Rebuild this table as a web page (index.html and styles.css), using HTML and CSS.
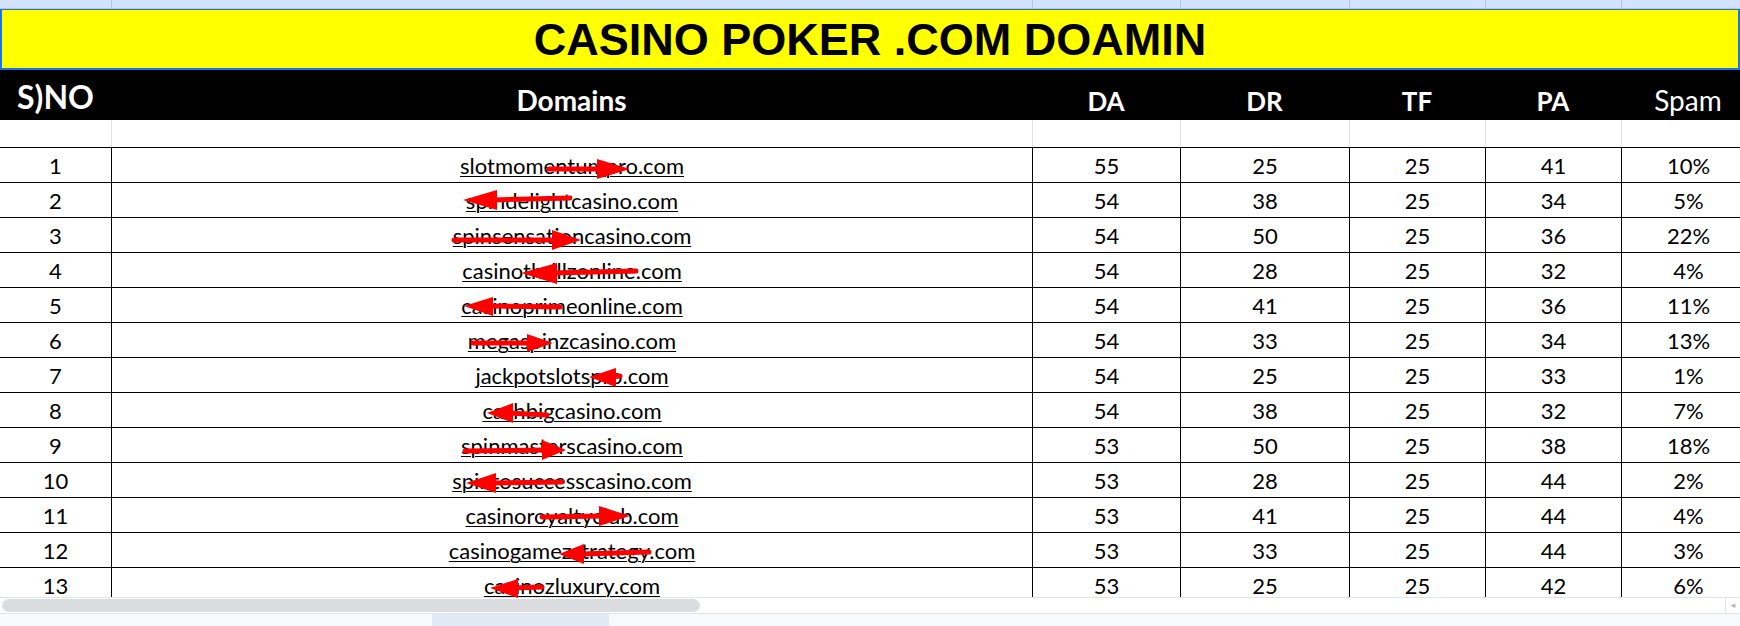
FILE: index.html
```html
<!DOCTYPE html>
<html>
<head>
<meta charset="utf-8">
<title>CASINO POKER .COM DOAMIN</title>
<link rel="stylesheet" href="styles.css">
</head>
<body>
<div class="sheet">
  <div class="row colhead">
    <div class="c"></div><div class="c"></div><div class="c"></div><div class="c"></div><div class="c"></div><div class="c"></div><div class="c"></div>
  </div>
  <div class="title">CASINO POKER .COM DOAMIN</div>
  <div class="row head">
    <div class="c sno">S)NO</div>
    <div class="c dom">Domains</div>
    <div class="c">DA</div>
    <div class="c">DR</div>
    <div class="c">TF</div>
    <div class="c">PA</div>
    <div class="c spam">Spam</div>
  </div>
  <div class="row blank">
    <div class="c"></div><div class="c"></div><div class="c"></div><div class="c"></div><div class="c"></div><div class="c"></div><div class="c"></div>
  </div>
  <div class="data">
    <div class="row d"><div class="c">1</div><div class="c"><span class="link">slotmomentumpro.com</span></div><div class="c">55</div><div class="c">25</div><div class="c">25</div><div class="c">41</div><div class="c">10%</div></div>
    <div class="row d"><div class="c">2</div><div class="c"><span class="link">spindelightcasino.com</span></div><div class="c">54</div><div class="c">38</div><div class="c">25</div><div class="c">34</div><div class="c">5%</div></div>
    <div class="row d"><div class="c">3</div><div class="c"><span class="link">spinsensationcasino.com</span></div><div class="c">54</div><div class="c">50</div><div class="c">25</div><div class="c">36</div><div class="c">22%</div></div>
    <div class="row d"><div class="c">4</div><div class="c"><span class="link">casinothrillzonline.com</span></div><div class="c">54</div><div class="c">28</div><div class="c">25</div><div class="c">32</div><div class="c">4%</div></div>
    <div class="row d"><div class="c">5</div><div class="c"><span class="link">casinoprimeonline.com</span></div><div class="c">54</div><div class="c">41</div><div class="c">25</div><div class="c">36</div><div class="c">11%</div></div>
    <div class="row d"><div class="c">6</div><div class="c"><span class="link">megaspinzcasino.com</span></div><div class="c">54</div><div class="c">33</div><div class="c">25</div><div class="c">34</div><div class="c">13%</div></div>
    <div class="row d"><div class="c">7</div><div class="c"><span class="link">jackpotslotspro.com</span></div><div class="c">54</div><div class="c">25</div><div class="c">25</div><div class="c">33</div><div class="c">1%</div></div>
    <div class="row d"><div class="c">8</div><div class="c"><span class="link">cashbigcasino.com</span></div><div class="c">54</div><div class="c">38</div><div class="c">25</div><div class="c">32</div><div class="c">7%</div></div>
    <div class="row d"><div class="c">9</div><div class="c"><span class="link">spinmasterscasino.com</span></div><div class="c">53</div><div class="c">50</div><div class="c">25</div><div class="c">38</div><div class="c">18%</div></div>
    <div class="row d"><div class="c">10</div><div class="c"><span class="link">spintosuccesscasino.com</span></div><div class="c">53</div><div class="c">28</div><div class="c">25</div><div class="c">44</div><div class="c">2%</div></div>
    <div class="row d"><div class="c">11</div><div class="c"><span class="link">casinoroyaltyclub.com</span></div><div class="c">53</div><div class="c">41</div><div class="c">25</div><div class="c">44</div><div class="c">4%</div></div>
    <div class="row d"><div class="c">12</div><div class="c"><span class="link">casinogamezstrategy.com</span></div><div class="c">53</div><div class="c">33</div><div class="c">25</div><div class="c">44</div><div class="c">3%</div></div>
    <div class="row d"><div class="c">13</div><div class="c"><span class="link">casinozluxury.com</span></div><div class="c">53</div><div class="c">25</div><div class="c">25</div><div class="c">42</div><div class="c">6%</div></div>
  </div>
  <div class="hscroll">
    <div class="thumb"></div>
    <div class="hs-end"><span class="hs-arrow">&#9666;</span></div>
  </div>
  <div class="tabs"><div class="tab-gap"></div><div class="tab-active"></div></div>

  <svg class="arrows" width="1740" height="626" viewBox="0 0 1740 626">
    <g stroke="#ff0000" stroke-width="5" stroke-linecap="round" fill="#ff0000">
      <line x1="549" y1="169" x2="602" y2="169"/><polygon points="630,169 597,159 597,179" stroke="none"/>
      <line x1="570" y1="198" x2="492" y2="200"/><polygon points="463,200 497,190 497,210" stroke="none"/>
      <line x1="454" y1="240" x2="556" y2="240"/><polygon points="581,240 552,230 552,250" stroke="none"/>
      <line x1="636" y1="271" x2="552" y2="273"/><polygon points="521,273 557,263 557,284" stroke="none"/>
      <line x1="560" y1="307" x2="488" y2="306"/><polygon points="464,306 493,297 493,316" stroke="none"/>
      <line x1="473" y1="343" x2="530" y2="343"/><polygon points="553,343 527,334 527,352" stroke="none"/>
      <line x1="620" y1="376" x2="610" y2="377"/><polygon points="589,377 616,368 616,387" stroke="none"/>
      <line x1="547" y1="415" x2="508" y2="413"/><polygon points="487,413 513,403 513,423" stroke="none"/>
      <line x1="465" y1="451" x2="546" y2="450"/><polygon points="566,450 542,440 542,460" stroke="none"/>
      <line x1="562" y1="482" x2="491" y2="483"/><polygon points="466,483 496,473 496,493" stroke="none"/>
      <line x1="542" y1="517" x2="603" y2="516"/><polygon points="630,516 599,506 599,526" stroke="none"/>
      <line x1="649" y1="552" x2="580" y2="554"/><polygon points="559,554 584,544 584,564" stroke="none"/>
      <line x1="542" y1="587" x2="513" y2="588"/><polygon points="490,588 518,579 518,598" stroke="none"/>
    </g>
  </svg>
</div>
</body>
</html>
```

FILE: styles.css
```css
* { box-sizing: border-box; }

html, body {
  margin: 0;
  padding: 0;
  background: #ffffff;
}

.sheet {
  position: relative;
  width: 1740px;
  height: 626px;
  overflow: hidden;
  background: #ffffff;
  font-family: Lato, "Open Sans", sans-serif;
  color: #000;
}

.row {
  display: grid;
  grid-template-columns: 111px 921px 148px 169px 136px 136px 134px;
  width: 1755px;
}

.c {
  display: flex;
  justify-content: center;
  align-items: flex-end;
  white-space: nowrap;
}

/* spreadsheet column header strip */
.colhead {
  height: 9px;
  background: #d3e3fd;
  border-bottom: 1px solid #c4c7c5;
}
.colhead .c + .c { border-left: 1px solid #b9c6dc; }

/* yellow title band */
.title {
  height: 61px;
  width: 1740px;
  background: #ffff00;
  border: 2px solid #1a73e8;
  border-top-width: 1px;
  display: flex;
  align-items: center;
  justify-content: center;
  font-family: "Liberation Sans", Arial, sans-serif;
  font-weight: 700;
  font-size: 45px;
  line-height: 58px;
  padding-top: 2px;
  color: #000;
}

/* black header row */
.head {
  height: 50px;
  background: #000;
  color: #fff;
}
.head .c {
  font-weight: 700;
  font-size: 26px;
  line-height: 1;
  padding-bottom: 6px;
}
.head .sno { font-size: 32px; padding-bottom: 7px; }
.head .dom { font-size: 28px; }
.head .spam { font-weight: 400; font-size: 28px; }

/* blank row */
.blank { height: 27px; }
.blank .c + .c { border-left: 1px solid #e1e1e1; }

/* data rows */
.data {
  height: 450px;
  overflow: hidden;
}
.d {
  height: 35px;
  border-top: 1px solid #000;
}
.d .c {
  font-size: 22px;
  line-height: 1;
  padding-bottom: 5px;
}
.d .c + .c { border-left: 1px solid #000; }

.link {
  text-decoration: underline;
  text-decoration-thickness: 1px;
  text-underline-offset: 2px;
}

/* horizontal scrollbar */
.hscroll {
  height: 17px;
  border-top: 1px solid #e1e3e6;
  border-bottom: 1px solid #e1e3e6;
  display: flex;
  align-items: center;
  justify-content: space-between;
  padding-left: 2px;
}
.thumb {
  width: 698px;
  height: 13px;
  border-radius: 7px;
  background: #dadce0;
}
.hs-end {
  width: 15px;
  height: 15px;
  border-left: 1px solid #e1e3e6;
  display: flex;
  align-items: center;
  justify-content: center;
}
.hs-arrow {
  font-family: "DejaVu Sans", sans-serif;
  font-size: 9px;
  color: #b0b3b8;
  line-height: 1;
}

/* bottom sheet-tab strip */
.tabs {
  height: 12px;
  background: #f8f9fa;
  display: flex;
}
.tab-gap { width: 432px; }
.tab-active {
  width: 177px;
  background: #e1e9f7;
}

/* annotation arrows drawn over the sheet */
.arrows {
  position: absolute;
  left: 0;
  top: 0;
  pointer-events: none;
}
```
